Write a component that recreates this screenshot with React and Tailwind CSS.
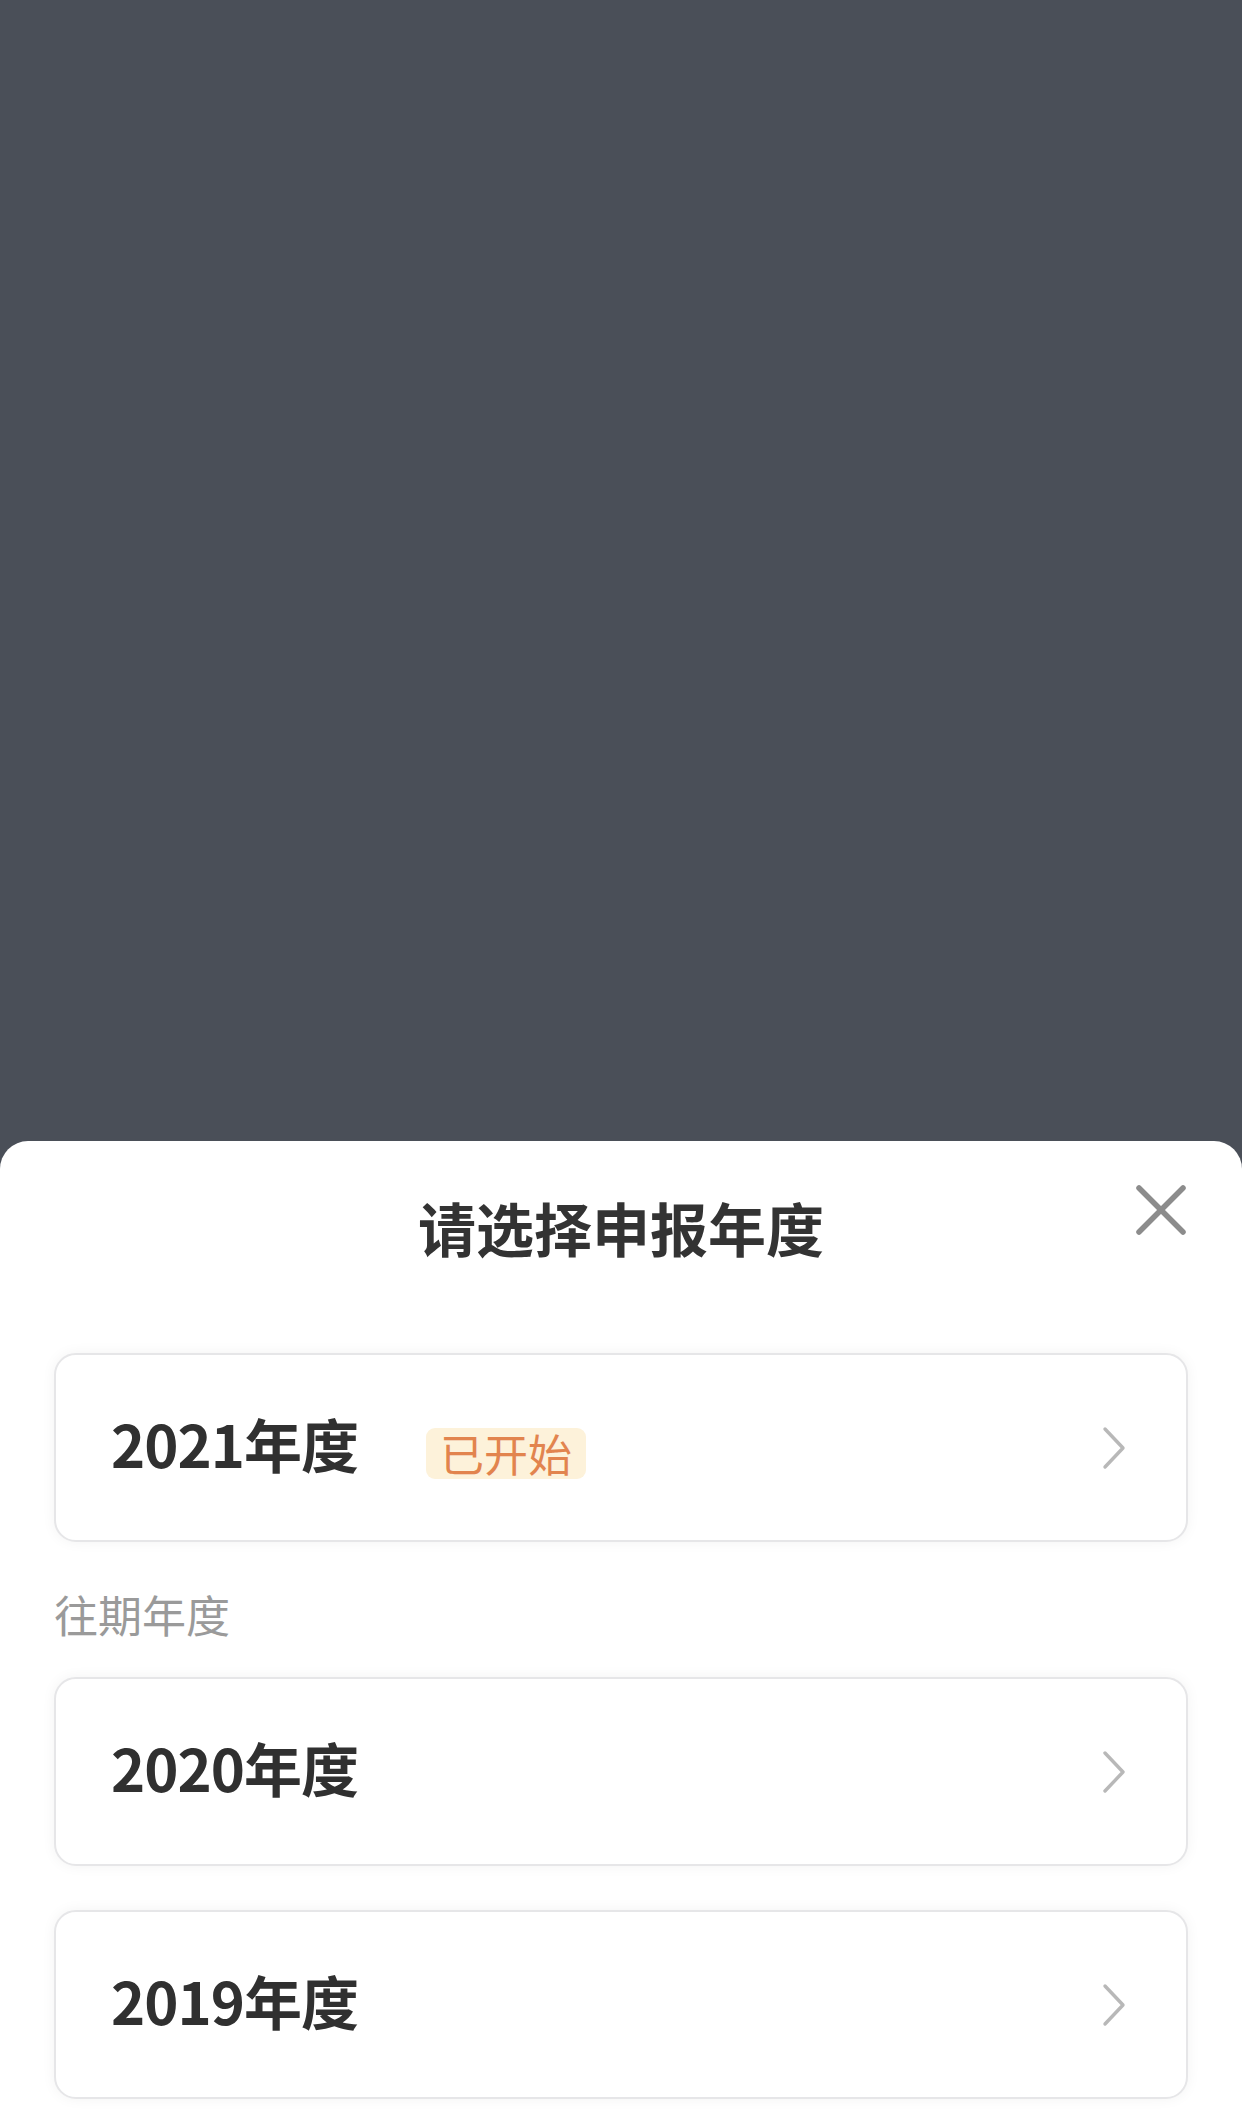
import React from "react";

function Chevron() {
  return (
    <svg width="26" height="44" viewBox="0 0 26 44" fill="none">
      <polyline points="4,3 22,22 4,41" stroke="#b8b8b8" strokeWidth="3.4" strokeLinecap="round" strokeLinejoin="round" />
    </svg>
  );
}

function YearCard({ year, badge, className }) {
  return (
    <div
      className={
        "h-[189px] rounded-[22px] border-2 border-[#e6e6e8] bg-white shadow-[0_0_14px_rgba(0,0,0,0.05)] flex items-center pl-[55px] pr-[59px] " +
        (className || "")
      }
    >
      <span className="-mt-[10px] text-[58px] font-bold text-[#303030] leading-none tracking-[-1px]">{year}年度</span>
      {badge && (
        <span className="ml-[68px] mt-[12px] h-[51px] px-[14px] rounded-[9px] bg-[#fdf2da] text-[#e2844e] text-[44px] leading-[51px]">
          {badge}
        </span>
      )}
      <span className="ml-auto flex items-center">
        <Chevron />
      </span>
    </div>
  );
}

export default function App() {
  return (
    <div
      className="w-full h-[2127px] bg-[#4a4f58] flex flex-col overflow-hidden"
      style={{ fontFamily: '"Noto Sans CJK SC", "Noto Sans", sans-serif' }}
    >
      <div className="h-[1141px] shrink-0" />
      <div className="flex-1 bg-white rounded-t-[28px] px-[54px] relative">
        <div className="h-[178px] pb-[6px] flex items-center justify-center">
          <h1 className="text-[58px] font-bold text-[#333333] leading-none">请选择申报年度</h1>
        </div>
        <button className="absolute right-[55px] top-[44px] w-[52px] h-[50px] flex items-center justify-center" aria-label="close">
          <svg width="52" height="50" viewBox="0 0 52 50" fill="none">
            <line x1="4" y1="3" x2="48" y2="47" stroke="#8c8c8c" strokeWidth="5.5" strokeLinecap="round" />
            <line x1="48" y1="3" x2="4" y2="47" stroke="#8c8c8c" strokeWidth="5.5" strokeLinecap="round" />
          </svg>
        </button>
        <YearCard year="2021" badge="已开始" className="mt-[34px]" />
        <div className="mt-[44px] h-[56px] leading-[56px] text-[44px] text-[#9a9a9a]">往期年度</div>
        <YearCard year="2020" className="mt-[35px]" />
        <YearCard year="2019" className="mt-[44px]" />
      </div>
    </div>
  );
}
